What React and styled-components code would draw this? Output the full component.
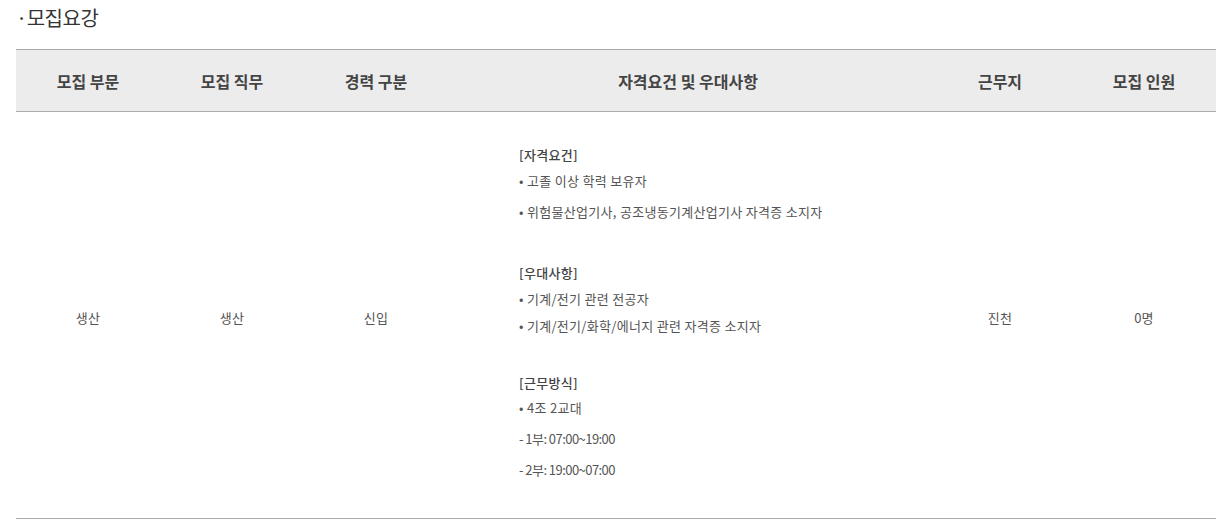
import React from "react";
import styled, { createGlobalStyle } from "styled-components";

const Global = createGlobalStyle`
  html, body { margin: 0; padding: 0; background: #fff; }
  body { font-family: "Noto Sans CJK KR", "Noto Sans", sans-serif; color: #555; }
`;

const Page = styled.div`
  padding: 0 16px;
`;

const Title = styled.h3`
  margin: 0;
  height: 49px;
  padding-top: 3px;
  box-sizing: border-box;
  font-size: 20px;
  font-weight: 400;
  line-height: 30px;
  color: #333;
  letter-spacing: -0.5px;
`;

const Table = styled.table`
  width: 1200px;
  border-collapse: collapse;
  table-layout: fixed;
  border-top: 1px solid #aaa;
  border-bottom: 1px solid #aaa;
`;

const HeadCell = styled.th`
  width: ${(p) => p.$w};
  height: 61px;
  padding: 0;
  background: #ececec;
  border-bottom: 1px solid #aaa;
  font-size: 16px;
  font-weight: 700;
  color: #444;
  text-align: center;
  vertical-align: middle;
  line-height: 20px;
`;

const Cell = styled.td`
  padding: 5px 0 0;
  font-size: 13px;
  color: #555;
  text-align: center;
  vertical-align: middle;
  line-height: 20px;
  letter-spacing: 0.2px;
`;

const DetailCell = styled.td`
  padding: 33px 0 38px 71px;
  text-align: left;
  vertical-align: top;
`;

const Line = styled.div`
  margin-top: ${(p) => p.$gap || 0}px;
  font-size: 13px;
  line-height: 20px;
  letter-spacing: ${(p) => (p.$tight ? "-0.55px" : "0.3px")};
  color: ${(p) => (p.$head ? "#444" : "#555")};
  font-weight: ${(p) => (p.$head ? 500 : 400)};
`;

const lines = [
  { t: "[자격요건]", head: true, gap: 0 },
  { t: "• 고졸 이상 학력 보유자", gap: 6 },
  { t: "• 위험물산업기사, 공조냉동기계산업기사 자격증 소지자", gap: 11 },
  { t: "[우대사항]", head: true, gap: 41 },
  { t: "• 기계/전기 관련 전공자", gap: 6 },
  { t: "• 기계/전기/화학/에너지 관련 자격증 소지자", gap: 7 },
  { t: "[근무방식]", head: true, gap: 37 },
  { t: "• 4조 2교대", gap: 5 },
  { t: "- 1부: 07:00~19:00", gap: 11, tight: true },
  { t: "- 2부: 19:00~07:00", gap: 11, tight: true },
];

const heads = [
  ["모집 부문", "12%"],
  ["모집 직무", "12%"],
  ["경력 구분", "12%"],
  ["자격요건 및 우대사항", "40%"],
  ["근무지", "12%"],
  ["모집 인원", "12%"],
];

export default function App() {
  return (
    <Page>
      <Global />
      <Title>·모집요강</Title>
      <Table>
        <thead>
          <tr>
            {heads.map(([h, w]) => (
              <HeadCell key={h} $w={w}>
                {h}
              </HeadCell>
            ))}
          </tr>
        </thead>
        <tbody>
          <tr>
            <Cell>생산</Cell>
            <Cell>생산</Cell>
            <Cell>신입</Cell>
            <DetailCell>
              {lines.map((l, i) => (
                <Line key={i} $head={l.head} $gap={l.gap} $tight={l.tight}>
                  {l.t}
                </Line>
              ))}
            </DetailCell>
            <Cell>진천</Cell>
            <Cell>0명</Cell>
          </tr>
        </tbody>
      </Table>
    </Page>
  );
}
